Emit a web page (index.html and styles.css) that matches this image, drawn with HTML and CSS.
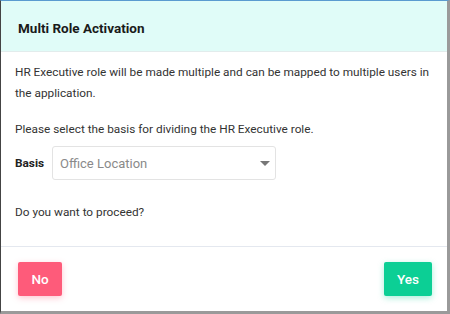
FILE: index.html
```html
<!DOCTYPE html>
<html lang="en">
<head>
    <meta charset="UTF-8">
    <title>Multi Role Activation</title>
    <link rel="stylesheet" href="styles.css">
</head>
<body>
    <div class="modal">
        <div class="modal-header">
            <h2>Multi Role Activation</h2>
        </div>
        <div class="modal-body">
            <p class="para">HR Executive role will be made multiple and can be mapped to multiple users in the application.</p>
            <p class="para para-select">Please select the basis for dividing the HR Executive role.</p>
            <div class="basis-row">
                <label for="basis">Basis</label>
                <div class="select-box">
                    <span class="select-value">Office Location</span>
                    <span class="caret"></span>
                </div>
            </div>
            <p class="para">Do you want to proceed?</p>
        </div>
        <div class="modal-footer">
            <button class="btn btn-no">No</button>
            <button class="btn btn-yes">Yes</button>
        </div>
    </div>
</body>
</html>
```

FILE: styles.css
```css
* {
    margin: 0;
    padding: 0;
    box-sizing: border-box;
    font-family: Roboto, 'Liberation Sans', sans-serif;
}

body {
    width: 450px;
    height: 314px;
    background: #fff;
}

.modal {
    width: 450px;
    height: 314px;
    display: flex;
    flex-direction: column;
    border-left: 1px solid #444;
    border-top: 1px solid #5a9bd0;
    border-right: 3px solid #9a9a9a;
    border-bottom: 3px solid #9a9a9a;
    background: #fff;
}

.modal-header {
    background-color: #e0fcf8;
    height: 51px;
    padding: 0 17px;
    display: flex;
    align-items: center;
    border-bottom: 1px solid #e2ecec;
}

.modal-header h2 {
    font-size: 13.5px;
    font-weight: 700;
    color: #1a1a1a;
    padding-top: 3px;
}

.modal-body {
    padding: 10px 8px 0 14px;
    flex: 1;
    color: #333;
    font-size: 11.8px;
    line-height: 21px;
}

.para {
    margin-bottom: 15px;
}

.para-select {
    margin-bottom: 6px;
}

.basis-row {
    display: flex;
    align-items: center;
    margin-bottom: 22px;
}

.basis-row label {
    font-weight: 700;
    color: #222;
    width: 37px;
}

.select-box {
    width: 224px;
    height: 34px;
    border: 1px solid #e3e3e3;
    border-radius: 3px;
    display: flex;
    align-items: center;
    justify-content: space-between;
    padding: 0 5px 0 7px;
}

.select-value {
    color: #8a8a8a;
    font-size: 13px;
}

.caret {
    width: 0;
    height: 0;
    border-left: 5px solid transparent;
    border-right: 5px solid transparent;
    border-top: 5px solid #777;
}

.modal-footer {
    height: 65px;
    border-top: 1px solid #e4e8ef;
    display: flex;
    justify-content: space-between;
    align-items: center;
    padding: 0 15px 0 17px;
}

.btn {
    height: 34px;
    border: none;
    border-radius: 2px;
    color: #fff;
    font-size: 13.5px;
    font-weight: 500;
    cursor: pointer;
}

.btn-no {
    width: 44px;
    background-color: #fe5b7a;
    box-shadow: 0 2px 6px rgba(254, 91, 122, 0.35);
}

.btn-yes {
    width: 48px;
    background-color: #0ccf95;
    box-shadow: 0 2px 6px rgba(12, 207, 149, 0.35);
}
```
